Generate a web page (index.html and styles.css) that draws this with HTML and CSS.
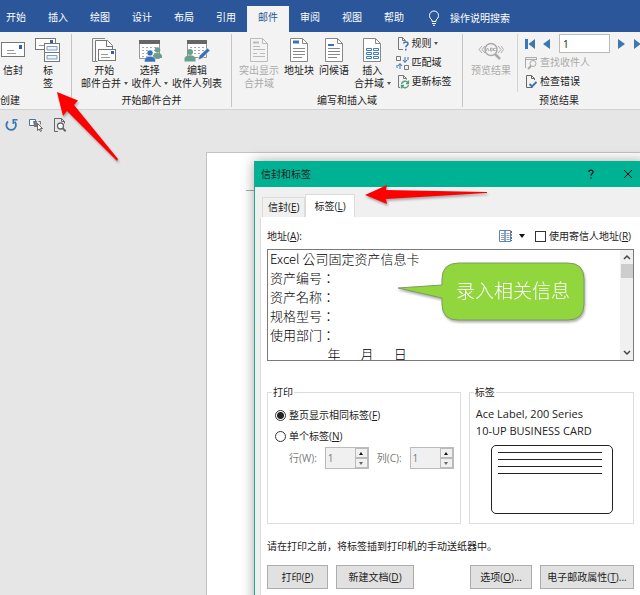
FILE: index.html
```html
<!DOCTYPE html>
<html lang="zh-CN">
  <head>
    <meta charset="UTF-8" />
    <meta name="viewport" content="width=device-width, initial-scale=1.0" />
    <title>信封和标签</title>
    <link rel="stylesheet" href="styles.css">
  </head>
  <body>
    <nav class="tabs">
      <a href="#">开始</a>
      <a href="#">插入</a>
      <a href="#">绘图</a>
      <a href="#">设计</a>
      <a href="#">布局</a>
      <a href="#">引用</a>
      <a href="#" class="active">邮件</a>
      <a href="#">审阅</a>
      <a href="#">视图</a>
      <a href="#">帮助</a>
      <a href="#" class="tell-me">
        <svg width="12" height="16" viewBox="0 0 12 16" fill="none" stroke="#fff"><path d="M4 11.500V10C2.500 8.800 1.500 7.500 1.500 5.500a4.500 4.500 0 0 1 9 0c0 2-1 3.300-2.500 4.500v1.500zM4 13.500h4M5 15.300h2"/></svg>
        操作说明搜索
      </a>
    </nav>

    <div class="ribbon">
      <section class="group group-create">
        <div class="group-body">
          <button class="big">
            <svg width="26" height="24" viewBox="0 0 26 24"><rect x="1.500" y="4.500" width="23" height="14" fill="#fff" stroke="#777"/><rect x="19" y="7" width="3" height="4" fill="#2f5fae"/><path d="M7 12.500h7M7 15.500h9" stroke="#999"/></svg>
            <span>信封</span>
          </button>
          <button class="big">
            <svg width="26" height="24" viewBox="0 0 26 24"><rect x=".5" y=".5" width="20" height="11" fill="#fff" stroke="#777"/><rect x="15" y="2" width="3" height="3" fill="#2f5fae"/><path d="M4 7.500h5" stroke="#999"/><rect x="9.500" y="5.500" width="15" height="18" fill="#fff" stroke="#777"/><path d="M9.500 14.500h15" stroke="#777"/><path d="M12 8.500h10v3.500H12zM12 17.500h10v3.500H12z" fill="#eef4fb" stroke="#7d9cc9"/></svg>
            <span>标<br>签</span>
          </button>
        </div>
        <h2>创建</h2>
      </section>

      <section class="group group-merge">
        <div class="group-body">
          <button class="big">
            <svg width="26" height="24" viewBox="0 0 26 24"><path d="M4 23.500H1.500V.5H14" fill="none" stroke="#888"/><path d="M6.500 23.500h-2V2.500h12l5 5v5" fill="#fff" stroke="#777"/><path d="M15.500 2.500v6h6" fill="none" stroke="#777"/><rect x="7.500" y="11.500" width="17" height="11" fill="#fff" stroke="#777"/><rect x="20" y="13" width="3" height="3" fill="#2f5fae"/><path d="M10 16.500h7M10 19.500h9" stroke="#999"/></svg>
            <span>开始<br>邮件合并 <i class="caret"></i></span>
          </button>
          <button class="big">
            <svg width="26" height="24" viewBox="0 0 26 24"><path d="M2.500 2.500h20v18h-20z" fill="#fff" stroke="#999"/><path d="M2 2h21v4H2z" fill="#666"/><path d="M5 9.500h15M5 12.500h15M5 15.500h15M5 18.500h6" stroke="#aaa" stroke-dasharray="2 2"/><circle cx="20.500" cy="12" r="2.800" fill="#6a9f8b"/><path d="M16 20v-2c0-4 9-4 9 0v2z" fill="#6a9f8b"/><circle cx="13" cy="15" r="3" fill="#3b70b5" stroke="#fff" stroke-width=".5"/><path d="M7.500 24v-2c0-5 11-5 11 0v2z" fill="#3b70b5" stroke="#fff" stroke-width=".5"/></svg>
            <span>选择<br>收件人 <i class="caret"></i></span>
          </button>
          <button class="big">
            <svg width="26" height="24" viewBox="0 0 26 24"><path d="M3.500 2.500h19v17h-19z" fill="#fff" stroke="#999"/><path d="M3 2h20v4H3z" fill="#666"/><path d="M6 9.500h14M6 12.500h14M6 15.500h14" stroke="#aaa" stroke-dasharray="2 2"/><circle cx="6" cy="14" r="3" fill="#6a9f8b"/><path d="M.5 23.500V21c0-5 11-5 11 0v2.500z" fill="#6a9f8b"/><path d="M14 22l1.500-4.500 8-7.500 2.500 2.500-8 8z" fill="#3b70b5" stroke="#fff" stroke-width=".6"/></svg>
            <span>编辑<br>收件人列表</span>
          </button>
        </div>
        <h2>开始邮件合并</h2>
      </section>

      <section class="group group-fields">
        <div class="group-body">
          <button class="big wide" disabled>
            <svg width="20" height="24" viewBox="0 0 20 24" fill="none" stroke="#bbb"><path d="M1.500.5h12l5 5v18h-17zM13.500.5v5h5M4 8.500h7M4 11.500h12M4 15.500h4M11 15.500h5M4 18.500h12"/><path d="M4 4.500h6" stroke-width="2"/></svg>
            <span>突出显示<br>合并域</span>
          </button>
          <button class="big">
            <svg width="20" height="24" viewBox="0 0 20 24" fill="none" stroke="#888"><path d="M1.500.5h12l5 5v18h-17z" fill="#fff"/><path d="M13.500.5v5h5M4 10.500h12M4 13.500h12M4 16.500h12M4 19.500h9"/><path d="M4 4h6" stroke="#3b70b5" stroke-width="3"/></svg>
            <span>地址块</span>
          </button>
          <button class="big">
            <svg width="20" height="24" viewBox="0 0 20 24" fill="none" stroke="#888"><path d="M1.500.5h12l5 5v18h-17z" fill="#fff"/><path d="M13.500.5v5h5M4 10.500h12M4 13.500h12M4 16.500h12M4 19.500h9"/><path d="M4 7h6" stroke="#3b70b5" stroke-width="2"/></svg>
            <span>问候语</span>
          </button>
          <button class="big">
            <svg width="20" height="24" viewBox="0 0 20 24" fill="none" stroke="#888"><path d="M1.500.5h12l5 5v18h-17z" fill="#fff"/><path d="M13.500.5v5h5"/><path d="M4.500 10.500h5v2h-5zM11.500 10.500h5v2h-5zM4.500 14.500h5v2h-5zM11.500 14.500h5v2h-5zM4.500 18.500h5v2h-5zM11.500 18.500h5v2h-5z" stroke="#3b7cc4"/></svg>
            <span>插入<br>合并域 <i class="caret"></i></span>
          </button>
          <div class="stack">
            <button class="small">
              <svg width="14" height="14" viewBox="0 0 14 14" fill="none"><path d="M7 12.500H2.500V.5h4l3 3" stroke="#777"/><path d="M6.500.5v3h3" stroke="#777"/><path d="M7.500 6.500c.5-2.300 4.500-2 4.500.2 0 1.800-2.200 1.500-2.200 3.600M9.800 11.800v1.600" stroke="#3b70b5" stroke-width="1.500"/></svg>
              规则 <i class="caret"></i>
            </button>
            <button class="small">
              <svg width="14" height="14" viewBox="0 0 14 14" fill="none"><path d="M.5.500h4v4h-4zM8.500 9.500h4v4h-4z" stroke="#777"/><path d="M9 1v5M7 4l2 2.500L11 4M12 1v3M4 13V8M2 10l2-2.500L6 10M1 9v3" stroke="#3b70b5"/></svg>
              匹配域
            </button>
            <button class="small">
              <svg width="14" height="14" viewBox="0 0 14 14" fill="none"><path d="M4 12.500H2.500V.5h5l3 3v1M7.500.5v3h3" stroke="#777"/><path d="M5.500 9c.5-3 5-4 6.500-1M12.500 5.500V8.500H10M12.500 10c-.5 3-5 4-6.500 1M5.500 13.500V10.500H8" stroke="#4d9a7c" stroke-width="1.300"/></svg>
              更新标签
            </button>
          </div>
        </div>
        <h2>编写和插入域</h2>
      </section>

      <section class="group group-preview">
        <div class="group-body">
          <button class="big wide" disabled>
            <svg width="26" height="24" viewBox="0 0 26 24" fill="none" stroke="#aaa"><path d="M4 8L1 11.500 4 15M7 8l-3 3.500L7 15M20 8l3 3.500L20 15M23 8l2.500 3.500L23 15"/><circle cx="13" cy="11.500" r="6" stroke-width="1.500"/><path d="M17 16l5 5" stroke-width="2.500"/><path d="M8 13l1.500-3 1.500 3M12.500 10v3h1.500v-3zM17.500 10.500h-2v2h2" stroke-width="1"/></svg>
            <span>预览结果</span>
          </button>
          <div class="stack preview-tools">
            <div class="record-nav">
              <button aria-label="首记录"><svg width="10" height="10" viewBox="0 0 10 10" fill="#3b76b5"><path d="M0 0h3v10H0zM10 0v10L3.500 5z"/></svg></button>
              <button aria-label="上一记录"><svg width="8" height="10" viewBox="0 0 8 10" fill="#3b76b5"><path d="M7 0v10L0 5z"/></svg></button>
              <input type="text" value="1" aria-label="记录">
              <button aria-label="下一记录"><svg width="8" height="10" viewBox="0 0 8 10" fill="#3b76b5"><path d="M0 0v10l7-5z"/></svg></button>
              <button aria-label="尾记录"><svg width="10" height="10" viewBox="0 0 10 10" fill="#3b76b5"><path d="M0 0v10l6.500-5zM7 0h3v10H7z"/></svg></button>
            </div>
            <button class="small" disabled>
              <svg width="14" height="14" viewBox="0 0 14 14" fill="none" stroke="#aaa"><path d="M1.500 12V1.500h11V4M1 3.500h11"/><circle cx="9" cy="7.500" r="3"/><path d="M7 10l-3 3" stroke-width="2"/></svg>
              查找收件人
            </button>
            <button class="small">
              <svg width="14" height="14" viewBox="0 0 14 14" fill="none" stroke="#666"><path d="M10.500 5V3.500l-3-3h-5v12h6M7.500.5v3h3"/><path d="M5.500 9l2.500 2.500L12.500 7" stroke="#3b70b5" stroke-width="1.800"/></svg>
              检查错误
            </button>
          </div>
        </div>
        <h2>预览结果</h2>
      </section>
    </div>

    <div class="quick-access">
      <button aria-label="重复"><svg width="14" height="14" viewBox="0 0 14 14" fill="none" stroke="#3b76b5" stroke-width="1.800"><path d="M3 3.500a4.800 4.800 0 1 0 6.500.2"/><path d="M12.500 1.700H8.300V6" stroke-width="1.500"/></svg></button>
      <button aria-label="选择对象"><svg width="14" height="14" viewBox="0 0 14 14" fill="none"><path d="M.5 1.500h6v6h-6z" fill="#fff" stroke="#3b70b5"/><path d="M4 3h4v6H5V8" fill="#777"/><path d="M9.500 3.500h2v3" stroke="#777"/><path d="M8.500 5.500v7l1.700-1.500 1.300 2.500 1-.5-1.200-2.500h2.200z" fill="#fff" stroke="#666"/></svg></button>
      <button aria-label="打印预览"><svg width="14" height="14" viewBox="0 0 14 14" fill="none" stroke="#666"><path d="M5 13.500H1.500V.5h7l3 3v2M8.500.5v3h3"/><circle cx="7.500" cy="8" r="3" fill="#fff" stroke-width="1.300"/><path d="M9.700 10.200l3 3" stroke-width="2"/></svg></button>
    </div>

    <main class="workspace">
      <div class="page">
        <div class="margin-mark"></div>
      </div>

      <div class="dialog" role="dialog" aria-labelledby="dialogTitle">
        <div class="title-bar">
          <h1 id="dialogTitle">信封和标签</h1>
          <button aria-label="帮助"><svg width="8" height="10" viewBox="0 0 8 10" fill="none" stroke="#111" stroke-width="1.300"><path d="M2 3c0-2.600 4-2.400 4 0C6 4.700 4 4.700 4 6.600M4 8.200v1.500"/></svg></button>
          <button aria-label="关闭"><svg width="10" height="10" viewBox="0 0 10 10" stroke="#111"><path d="M1 1l8 8M9 1L1 9"/></svg></button>
        </div>
        <div class="dialog-body">
          <div class="dialog-tabs">
            <button>信封(<u>E</u>)</button>
            <button class="active">标签(<u>L</u>)</button>
          </div>
          <form class="panel">
            <div class="address-head">
              <label for="address">地址(<u>A</u>):</label>
              <button type="button" class="book" aria-label="通讯簿">
                <svg width="14" height="12" viewBox="0 0 14 12" fill="none"><path d="M.5.500h5.500v11H.5zM6 .5h5.500v11H6z" fill="#fff" stroke="#5b86bd"/><path d="M2 3.500h3M2 5.500h3M2 7.500h3M2 9.500h3M7.500 3.500h3M7.500 5.500h3M7.500 7.500h3M7.500 9.500h3" stroke="#999"/><path d="M12.500 1v2" stroke="#d33"/><path d="M12.500 4v2" stroke="#3a8"/><path d="M12.500 7v4" stroke="#36a" stroke-dasharray="2 1"/></svg>
                <i class="caret"></i>
              </button>
              <label class="check"><input type="checkbox">使用寄信人地址(<u>R</u>)</label>
            </div>
            <div class="address-box">
              <textarea id="address" lang="zh-TW" spellcheck="false">Excel 公司固定资产信息卡
资产编号：
资产名称：
规格型号：
使用部门：
                    年       月       日</textarea>
              <div class="scrollbar">
                <svg width="8" height="6" viewBox="0 0 8 6" fill="none" stroke="#444" stroke-width="1.500"><path d="M1 5l3-3 3 3"/></svg>
                <div class="thumb"></div>
                <svg width="8" height="6" viewBox="0 0 8 6" fill="none" stroke="#444" stroke-width="1.500"><path d="M1 1l3 3 3-3"/></svg>
              </div>
            </div>

            <div class="columns">
              <fieldset class="print">
                <legend>打印</legend>
                <label class="radio"><input type="radio" name="mode" checked>整页显示相同标签(<u>F</u>)</label>
                <label class="radio"><input type="radio" name="mode">单个标签(<u>N</u>)</label>
                <div class="position">
                  <label for="row">行(W):</label>
                  <div class="spinner">
                    <input id="row" type="text" value="1" disabled>
                    <div class="spin-buttons"><button type="button" aria-label="增加行"><i class="up"></i></button><button type="button" aria-label="减少行"><i class="down"></i></button></div>
                  </div>
                  <label for="col">列(C):</label>
                  <div class="spinner">
                    <input id="col" type="text" value="1" disabled>
                    <div class="spin-buttons"><button type="button" aria-label="增加列"><i class="up"></i></button><button type="button" aria-label="减少列"><i class="down"></i></button></div>
                  </div>
                </div>
              </fieldset>
              <fieldset class="label-type">
                <legend>标签</legend>
                <p>Ace Label, 200 Series</p>
                <p>10-UP BUSINESS CARD</p>
                <div class="card-preview"><hr><hr><hr><hr></div>
              </fieldset>
            </div>

            <p class="hint">请在打印之前，将标签插到打印机的手动送纸器中。</p>
            <div class="actions">
              <button type="button" class="print-btn">打印(<u>P</u>)</button>
              <button type="button" class="new-btn">新建文档(<u>D</u>)</button>
              <button type="button" class="options-btn">选项(<u>O</u>)...</button>
              <button type="button" class="postage-btn">电子邮政属性(<u>T</u>)...</button>
            </div>
          </form>
        </div>
      </div>
    </main>

    <!-- annotations -->
    <svg class="arrow arrow-ribbon" width="64" height="72" viewBox="0 0 64 72"><path d="M1 1l21 8.500-4 4.500 44 54-1 2L11 20l-4 5z" fill="#fe0000"/></svg>
    <svg class="arrow arrow-tab" width="126" height="22" viewBox="0 0 126 22"><path d="M1 11L23 1l-1 5 101 2v1L22 15l1 5z" fill="#fe0000"/></svg>
    <div class="callout">
      <svg width="192" height="62" viewBox="0 0 192 62"><path d="M63 2h109q16 0 16 16v25q0 16-16 16H62q-16 0-16-16V37L2 27l44-3v-6q0-16 17-16z" fill="#92d63e" stroke="#7f9a62"/></svg>
      <span>录入相关信息</span>
    </div>
  </body>
</html>
```

FILE: styles.css
```css
* {
  box-sizing: border-box;
  margin: 0;
  padding: 0;
}

body {
  display: flex;
  flex-direction: column;
  position: relative;
  height: 100vh;
  overflow: hidden;
  background-color: #e6e6e6;
  color: #222;
  font-family: "Open Sans", "Noto Sans CJK SC", sans-serif;
  font-size: 10px;
  line-height: 13px;
  white-space: nowrap;
}

button,
input,
textarea {
  font: inherit;
  color: inherit;
}

button {
  background: none;
  border: none;
}

svg {
  display: block;
  flex-shrink: 0;
}

h1,
h2 {
  font-size: 10px;
  font-weight: normal;
}

.caret {
  display: inline-block;
  border: 2px solid transparent;
  border-top: 3px solid #555;
  border-bottom: 0;
  vertical-align: 2px;
}

/* tabs */
.tabs {
  display: flex;
  flex-shrink: 0;
  height: 32px;
  padding-top: 6px;
  margin-left: -5px;
  background-color: #2b579a;
}

.tabs a {
  padding: 5px 11px;
  color: #fff;
  text-decoration: none;
}

.tabs .active {
  background-color: #f3f3f3;
  color: #2b579a;
}

.tabs .tell-me {
  display: flex;
  align-items: center;
  gap: 10px;
  margin-left: 2px;
  padding: 0 11px 2px;
}

/* ribbon */
.ribbon {
  display: grid;
  grid-template-columns: 72px 160px 231px 1fr;
  flex-shrink: 0;
  height: 78px;
  padding-top: 2px;
  background-color: #f3f3f3;
  border-bottom: 1px solid #d2d2d2;
}

.group {
  position: relative;
  min-width: 0;
}

.group:not(:last-child) {
  border-right: 1px solid #c4c4c4;
  margin-bottom: 3px;
}

.group-body {
  display: flex;
  height: 58px;
}

.group h2 {
  padding-top: 2px;
  text-align: center;
}

.big {
  display: flex;
  flex-direction: column;
  align-items: center;
  gap: 2px;
  padding-top: 4px;
}

button:disabled {
  color: #aaa;
}

.group-create .big {
  width: 26px;
}

.group-create .group-body {
  gap: 9px;
}

.group-create h2 {
  text-align: left;
}

.group-merge .group-body {
  justify-content: center;
  gap: 4px;
}

.group-fields .group-body {
  gap: 5px;
  padding-left: 7px;
}

.stack {
  display: flex;
  flex-direction: column;
}

.small {
  display: flex;
  align-items: center;
  gap: 2px;
  height: 19px;
}

.group-preview {
  min-width: 192px;
}

.group-preview .group-body {
  padding-left: 8px;
  gap: 6px;
}

.preview-tools {
  padding-left: 6px;
  border-left: 1px solid #d4d4d4;
}

.record-nav {
  display: flex;
  align-items: center;
  gap: 8px;
  height: 19px;
  padding-left: 1px;
}

.record-nav input {
  width: 51px;
  height: 19px;
  padding: 0 3px;
  background-color: #fff;
  border: 1px solid #bbb;
}

/* quick access toolbar */
.quick-access {
  display: flex;
  flex-shrink: 0;
  align-items: center;
  gap: 10px;
  height: 29px;
  padding-left: 5px;
}

/* document */
.workspace {
  display: flex;
  flex: 1;
  position: relative;
  padding: 13px 0 0 206px;
}

.page {
  flex: 1;
  background-color: #fff;
  border-top: 1px solid #c3c3c3;
  border-left: 1px solid #c3c3c3;
}

.margin-mark {
  width: 8px;
  margin: 37px 0 0 39px;
  border-top: 1px solid #aaa;
}

/* dialog */
.dialog {
  position: absolute;
  top: 22px;
  right: -6px;
  bottom: -12px;
  left: 254px;
  background-color: #f0f0f0;
  border-left: 1px solid #1fa88f;
  box-shadow: 0 0 12px rgba(0, 0, 0, 0.35);
}

.title-bar {
  display: flex;
  align-items: center;
  gap: 28px;
  height: 26px;
  padding: 0 13px 0 6px;
  background-color: #00b294;
}

.title-bar h1 {
  flex: 1;
}

.dialog-body {
  padding: 7px 5px 0;
}

.dialog-tabs {
  display: flex;
  align-items: flex-end;
  padding-left: 2px;
}

.dialog-tabs button {
  height: 20px;
  padding: 0 5px;
  border: 1px solid #dcdcdc;
  border-bottom: 0;
}

.dialog-tabs .active {
  height: 23px;
  padding: 0 8px;
  background-color: #fff;
}

.panel {
  height: 400px;
  padding: 9px 6px;
  background-color: #fff;
  border: 1px solid #dcdcdc;
  border-top-color: #fff;
}

.address-head {
  display: flex;
  align-items: center;
  height: 18px;
  margin-bottom: 4px;
  padding-right: 3px;
}

.book {
  display: flex;
  align-items: center;
  gap: 6px;
  margin: 0 10px 0 auto;
}

.book .caret {
  border-width: 4px 3px 0;
  border-top-color: #111;
}

.check,
.radio {
  display: flex;
  align-items: center;
}

.check input {
  appearance: none;
  width: 11px;
  height: 11px;
  margin-right: 3px;
  border: 1px solid #333;
}

.address-box {
  display: flex;
  height: 112px;
  border: 1px solid #7a7a7a;
}

.address-box textarea {
  flex: 1;
  min-width: 0;
  margin-top: -1px;
  padding-left: 2px;
  background: none;
  border: none;
  outline: none;
  resize: none;
  overflow: hidden;
  color: #000;
  font-family: "Noto Sans CJK TC", sans-serif;
  font-size: 13px;
  font-weight: 300;
  line-height: 19px;
}

.scrollbar {
  display: flex;
  flex-direction: column;
  align-items: center;
  width: 13px;
  padding: 4px 0;
  background-color: #f0f0f0;
}

.scrollbar .thumb {
  width: 12px;
  height: 14px;
  margin: 4px 0 auto;
  background-color: #cdcdcd;
}

.columns {
  display: flex;
  gap: 8px;
  height: 139px;
  margin-top: 24px;
}

fieldset {
  border: 1px solid #dcdcdc;
}

legend {
  margin-left: 4px;
  padding: 0 1px;
  line-height: 14px;
}

.print {
  flex: 194;
}

.label-type {
  flex: 165;
}

.radio {
  height: 21px;
  margin-left: 7px;
}

legend + .radio {
  margin-top: 6px;
}

.radio input {
  appearance: none;
  width: 11px;
  height: 11px;
  margin-right: 3px;
  border: 1px solid #333;
  border-radius: 50%;
}

.radio input:checked {
  background: radial-gradient(#222 0 3px, #fff 4px);
}

.position {
  display: flex;
  align-items: center;
  gap: 8px;
  margin-left: 21px;
  color: #7a7a7a;
}

.spinner {
  display: flex;
  width: 44px;
  height: 22px;
  background-color: #f0f0f0;
  border: 1px solid #bbb;
}

.spinner input {
  flex: 1;
  min-width: 0;
  padding: 0 2px;
  background: none;
  border: none;
}

.spin-buttons {
  display: flex;
  flex-direction: column;
  width: 13px;
}

.spin-buttons button {
  display: flex;
  flex: 1;
  align-items: center;
  justify-content: center;
  border: 1px solid #bbb;
}

.up,
.down {
  border: 2px solid transparent;
}

.up {
  border-top: 0;
  border-bottom: 3px solid #111;
}

.down {
  border-bottom: 0;
  border-top: 3px solid #666;
}

.label-type p {
  padding-left: 6px;
  font-size: 11px;
  line-height: 17px;
}

legend + p {
  margin-top: 6px;
}

.card-preview {
  width: 122px;
  height: 69px;
  margin: 6px 0 0 21px;
  padding: 6px 10px 0 6px;
  border: 1px solid #222;
  border-radius: 5px;
}

.card-preview hr {
  margin-bottom: 6px;
  border: 0;
  border-top: 1px solid #222;
}

.hint {
  margin-top: 15px;
  line-height: 15px;
}

.actions {
  display: flex;
  gap: 8px;
  margin-top: 11px;
}

.actions button {
  height: 24px;
  background-color: #e1e1e1;
  border: 1px solid #adadad;
}

.print-btn {
  width: 61px;
}

.new-btn {
  width: 78px;
}

.options-btn {
  width: 62px;
  margin-left: auto;
}

.postage-btn {
  width: 94px;
}

/* annotations */
.arrow,
.callout {
  position: absolute;
  filter: drop-shadow(1px 2px 1px rgba(0, 0, 0, 0.3));
}

.arrow-ribbon {
  top: 91px;
  left: 56px;
}

.arrow-tab {
  top: 184px;
  left: 364px;
}

.callout {
  top: 261px;
  left: 396px;
}

.callout span {
  position: absolute;
  top: 16px;
  left: 60px;
  color: #fff;
  font-family: "Noto Sans CJK SC", sans-serif;
  font-size: 19px;
  font-weight: 300;
  line-height: 26px;
}
```
